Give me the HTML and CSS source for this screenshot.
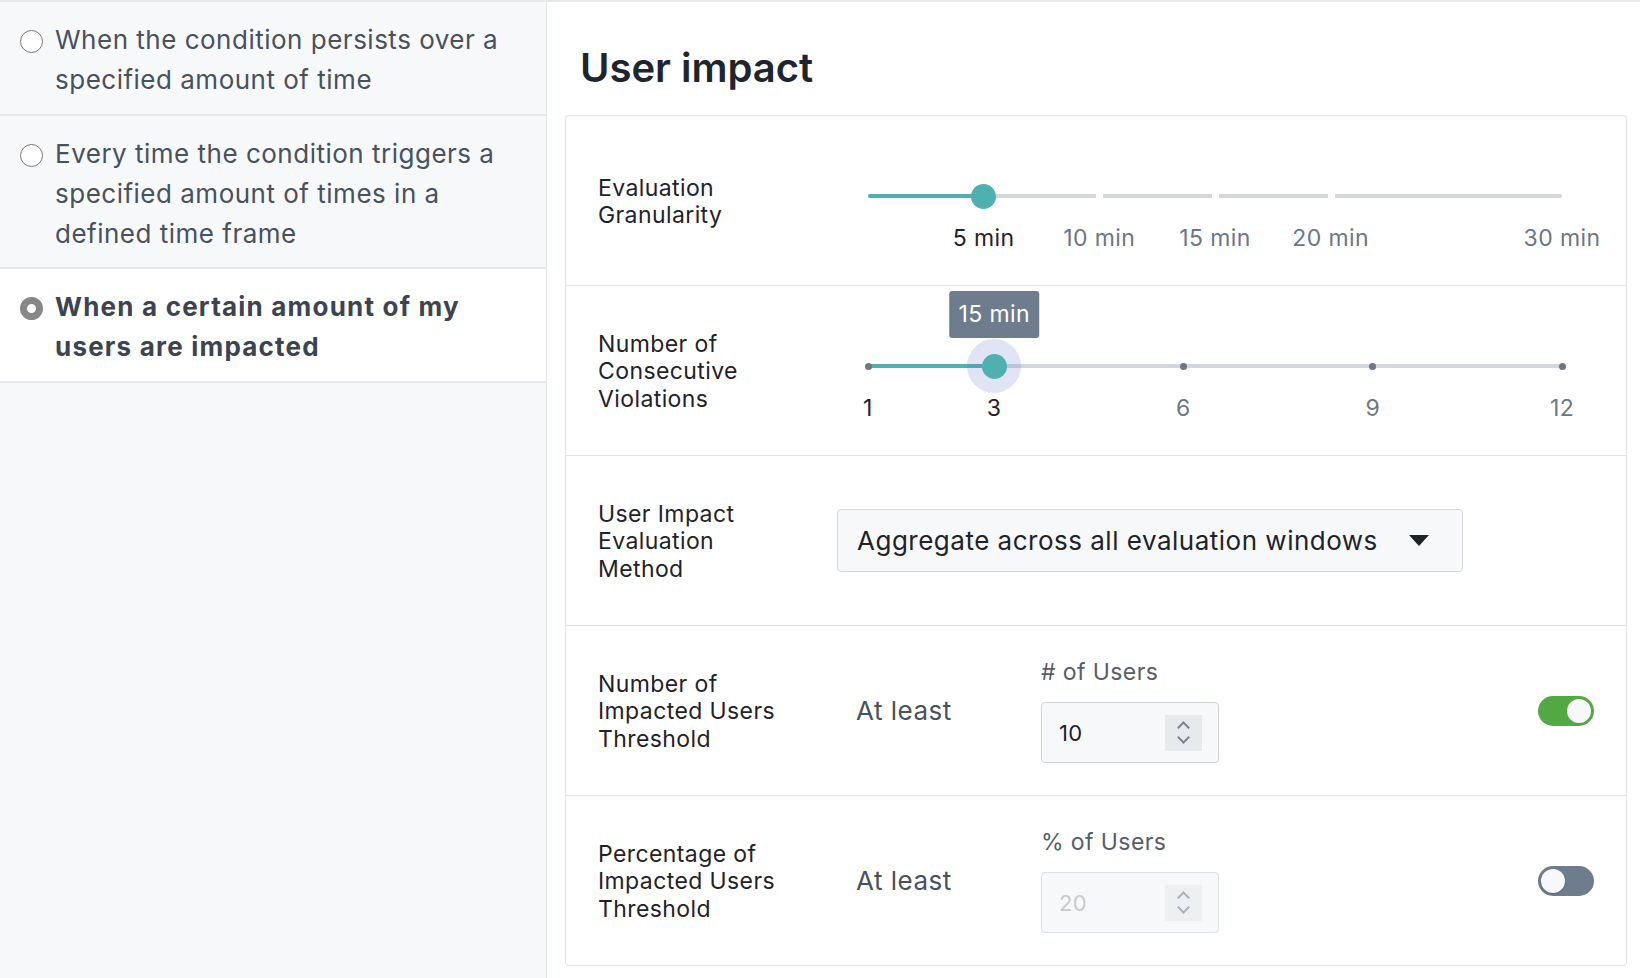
FILE: index.html
```html
<!DOCTYPE html>
<html lang="en">
<head>
  <meta charset="UTF-8">
  <title>User impact</title>
  <link rel="stylesheet" href="styles.css">
</head>
<body>
  <div class="page">
    <div class="sidebar">
      <div class="option">
        <span class="radio"></span>
        <span class="option-text">When the condition persists over a specified amount of time</span>
      </div>
      <div class="option">
        <span class="radio"></span>
        <span class="option-text">Every time the condition triggers a specified amount of times in a defined time frame</span>
      </div>
      <div class="option selected">
        <span class="radio"></span>
        <span class="option-text">When a certain amount of my users are impacted</span>
      </div>
    </div>

    <div class="main">
      <h1>User impact</h1>
      <div class="card">
        <div class="row">
          <div class="label">Evaluation<br>Granularity</div>
          <div class="slider">
            <div class="track">
              <div class="fill" style="width: 16.67%"></div>
              <span class="gap" style="left: 33.33%"></span>
              <span class="gap" style="left: 50%"></span>
              <span class="gap" style="left: 66.67%"></span>
            </div>
            <span class="thumb" style="left: 16.67%"></span>
            <span class="mark active" style="left: 16.67%">5 min</span>
            <span class="mark" style="left: 33.33%">10 min</span>
            <span class="mark" style="left: 50%">15 min</span>
            <span class="mark" style="left: 66.67%">20 min</span>
            <span class="mark" style="left: 100%">30 min</span>
          </div>
        </div>

        <div class="row">
          <div class="label">Number of<br>Consecutive<br>Violations</div>
          <div class="slider">
            <div class="track">
              <div class="fill" style="width: 18.18%"></div>
            </div>
            <span class="dot" style="left: 0%"></span>
            <span class="dot" style="left: 45.45%"></span>
            <span class="dot" style="left: 72.73%"></span>
            <span class="dot" style="left: 100%"></span>
            <span class="halo" style="left: 18.18%"></span>
            <span class="thumb" style="left: 18.18%"></span>
            <span class="tip" style="left: 18.18%">15 min</span>
            <span class="mark active" style="left: 0%">1</span>
            <span class="mark active" style="left: 18.18%">3</span>
            <span class="mark" style="left: 45.45%">6</span>
            <span class="mark" style="left: 72.73%">9</span>
            <span class="mark" style="left: 100%">12</span>
          </div>
        </div>

        <div class="row">
          <div class="label">User Impact<br>Evaluation<br>Method</div>
          <div class="select">
            <span>Aggregate across all evaluation windows</span>
            <span class="caret"></span>
          </div>
        </div>

        <div class="row threshold">
          <div class="label">Number of<br>Impacted Users<br>Threshold</div>
          <div class="at-least">At least</div>
          <div class="field">
            <div class="field-label"># of Users</div>
            <div class="number">
              <span>10</span>
              <span class="spin"><i class="up"></i><i class="down"></i></span>
            </div>
          </div>
          <div class="toggle on"><span class="knob"></span></div>
        </div>

        <div class="row threshold">
          <div class="label">Percentage of<br>Impacted Users<br>Threshold</div>
          <div class="at-least">At least</div>
          <div class="field">
            <div class="field-label">% of Users</div>
            <div class="number disabled">
              <span>20</span>
              <span class="spin"><i class="up"></i><i class="down"></i></span>
            </div>
          </div>
          <div class="toggle"><span class="knob"></span></div>
        </div>
      </div>
    </div>
  </div>
</body>
</html>
```

FILE: styles.css
```css
body {
  margin: 0;
  font-family: Inter, "Noto Sans", sans-serif;
  background: #fff;
}
.page {
  display: flex;
  min-height: 976px;
  border-top: 2px solid #e6e8eb;
}

/* left column with the radio options */
.sidebar {
  width: 546px;
  flex-shrink: 0;
  background: #f7f8fa;
  border-right: 1px solid #e1e4e8;
}
.option {
  display: flex;
  align-items: flex-start;
  gap: 12px;
  padding: 18px 36px 13.5px 20px;
  border-bottom: 2px solid #e4e7eb;
  font-size: 26px;
  line-height: 40px;
  letter-spacing: 0.5px;
  color: #48515d;
}
.option.selected {
  background: #fff;
  font-weight: 700;
  letter-spacing: 1.2px;
  color: #3b4450;
}
.radio {
  flex-shrink: 0;
  width: 21px;
  height: 21px;
  margin-top: 10px;
  border: 1.5px solid #777;
  border-radius: 50%;
  background: #fff;
}
.selected .radio {
  width: 9px;
  height: 9px;
  border: 7.5px solid #878787;
}

/* right side */
.main {
  flex: 1;
  padding: 0 13px 0 18px;
}
h1 {
  margin: 0;
  padding: 40px 0 0 15px;
  font-size: 40px;
  line-height: 52px;
  font-weight: 600;
  color: #1d2530;
}
.card {
  margin-top: 21px;
  border: 1px solid #dfe3e8;
  border-radius: 4px;
}
.row {
  display: grid;
  grid-template-columns: 239px 1fr;
  align-items: center;
  height: 169px;
  padding-left: 32px;
  border-bottom: 1px solid #dfe3e8;
}
.row:last-child {
  border-bottom: none;
}
.label {
  padding-top: 3px;
  font-size: 23px;
  line-height: 27.5px;
  letter-spacing: 0.4px;
  color: #1f2328;
}

/* sliders */
.slider {
  position: relative;
  height: 103px;
  margin: 0 64px 0 31px;
}
.track {
  position: absolute;
  top: 45px;
  left: 0;
  right: 0;
  height: 4px;
  border-radius: 2px;
  background: #d3d6da;
}
.fill {
  height: 4px;
  border-radius: 2px;
  background: #4fb0b0;
}
.gap {
  position: absolute;
  top: -1px;
  width: 7px;
  height: 6px;
  margin-left: -3px;
  background: #fff;
}
.thumb {
  position: absolute;
  top: 35px;
  width: 25px;
  height: 25px;
  margin-left: -12.5px;
  border-radius: 50%;
  background: #4fb0b0;
}
.halo {
  position: absolute;
  top: 20px;
  width: 54px;
  height: 54px;
  margin-left: -27px;
  border-radius: 50%;
  background: rgba(104, 120, 200, 0.2);
}
.dot {
  position: absolute;
  top: 43.5px;
  width: 7px;
  height: 7px;
  margin-left: -3.5px;
  border-radius: 50%;
  background: #6b7785;
}
.mark {
  position: absolute;
  top: 75px;
  transform: translateX(-50%);
  font-size: 23px;
  line-height: 28px;
  letter-spacing: 0.4px;
  color: #6b7785;
  white-space: nowrap;
}
.mark.active {
  color: #1f2328;
}
.tip {
  position: absolute;
  top: -28px;
  transform: translateX(-50%);
  padding: 0 9px;
  height: 47px;
  line-height: 47px;
  border-radius: 3px;
  background: #6e7c8e;
  color: #fff;
  font-size: 23px;
  letter-spacing: 0.4px;
  white-space: nowrap;
}

/* dropdown */
.select {
  display: flex;
  align-items: center;
  justify-content: space-between;
  box-sizing: content-box;
  width: 572px;
  height: 61px;
  padding: 0 33px 0 19px;
  border: 1px solid #d5d9de;
  border-radius: 4px;
  background: #f7f8fa;
  font-size: 26px;
  letter-spacing: 0.5px;
  color: #1f2328;
}
.caret {
  width: 0;
  height: 0;
  border-left: 10px solid transparent;
  border-right: 10px solid transparent;
  border-top: 11px solid #1f2328;
}

/* thresholds */
.row.threshold {
  grid-template-columns: 239px 204px 178px 1fr 56px;
  padding-right: 32px;
}
.at-least {
  padding-left: 19px;
  font-size: 26px;
  letter-spacing: 0.5px;
  color: #48515d;
}
.field-label {
  font-size: 23px;
  line-height: 28px;
  letter-spacing: 0.4px;
  margin-bottom: 16px;
  color: #545e6b;
}
.number {
  display: flex;
  align-items: center;
  justify-content: space-between;
  height: 59px;
  padding: 0 16px 0 17px;
  border: 1px solid #cfd4d9;
  border-radius: 4px;
  background: #f7f8fa;
  font-size: 22px;
  letter-spacing: 0.3px;
  color: #1f2328;
}
.number.disabled {
  border-color: #dde1e5;
  color: #c6cbd1;
}
.spin {
  display: flex;
  flex-direction: column;
  align-items: center;
  justify-content: center;
  gap: 5px;
  width: 37px;
  height: 36px;
  background: #e8e9ec;
}
.disabled .spin {
  background: #eeeff1;
}
.spin i {
  width: 7px;
  height: 7px;
  border-left: 2px solid #7a838f;
  border-top: 2px solid #7a838f;
}
.spin .up {
  transform: translateY(2px) rotate(45deg);
}
.spin .down {
  transform: translateY(-2px) rotate(225deg);
}
.disabled .spin i {
  border-color: #a9b0b8;
}
.toggle {
  position: relative;
  grid-column: 5;
  width: 56px;
  height: 30px;
  border-radius: 15px;
  background: #6e7c8e;
}
.toggle.on {
  background: #52a842;
}
.knob {
  position: absolute;
  top: 3px;
  left: 3px;
  width: 24px;
  height: 24px;
  border-radius: 50%;
  background: #f7f8fa;
  box-shadow: 0 1px 2px rgba(0, 0, 0, 0.2);
}
.on .knob {
  left: 29px;
  box-shadow: none;
}
```
